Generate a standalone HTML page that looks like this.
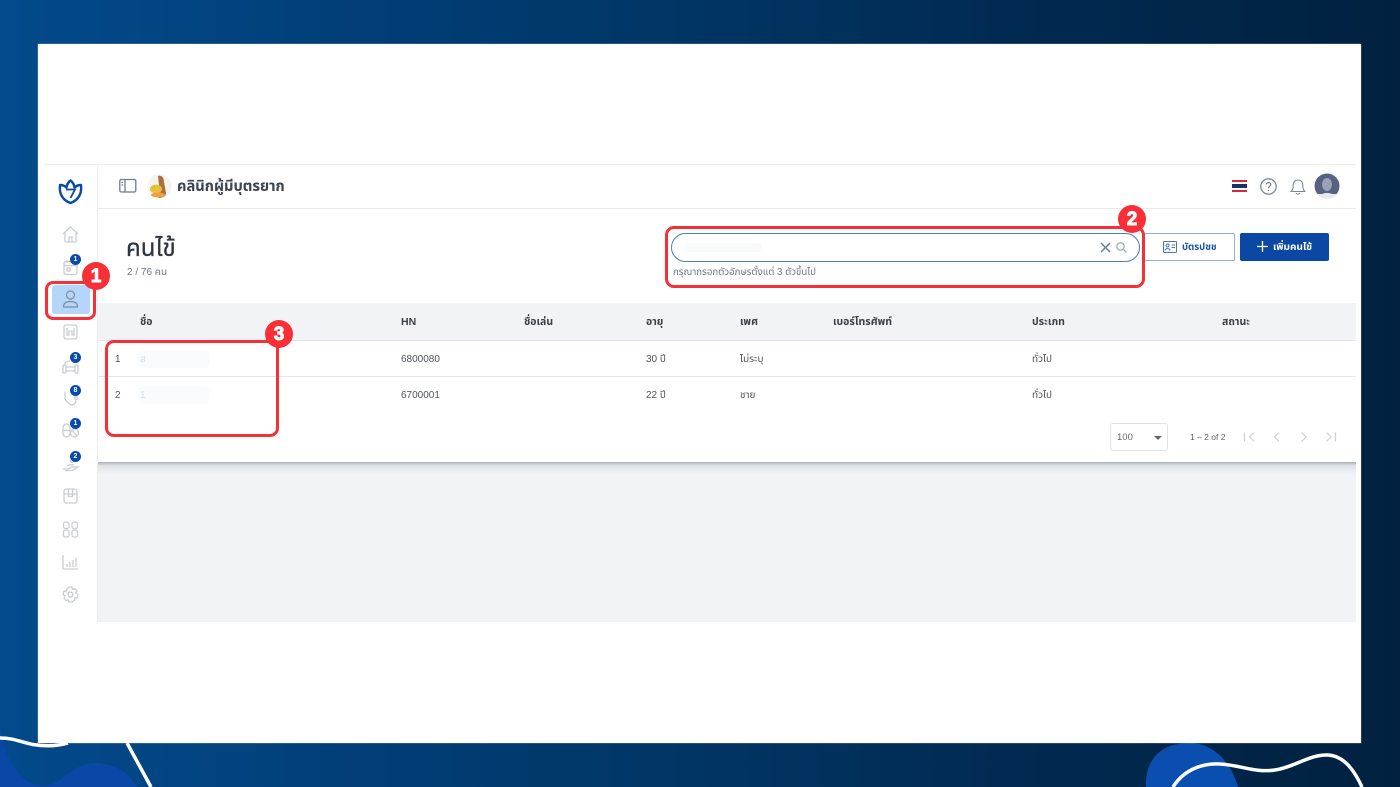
<!DOCTYPE html>
<html><head><meta charset="utf-8">
<style>
html,body{margin:0;padding:0}
body{width:1400px;height:787px;overflow:hidden;position:relative;background:linear-gradient(90deg,#024a8c 0%,#013d75 28%,#013462 52%,#012a52 72%,#01213f 100%);font-family:"Liberation Sans","Noto Sans Thai","Noto Sans CJK SC",sans-serif;color:#4f545c}
.a{position:absolute}
.t{position:absolute;white-space:nowrap;line-height:16px;font-size:10px}
.h{font-size:10.500px;top:313.500px}
.b{font-weight:700;color:#3a4048}
.r1{top:351.500px}
.r2{top:387.500px}
.badge{position:absolute;width:11px;height:11px;border-radius:50%;background:#0a4aa8;color:#fff;font-size:7px;line-height:11px;text-align:center;font-weight:700}
.num{position:absolute;width:28px;height:28px;border-radius:50%;background:#f92f37;color:#fff;font-size:19px;line-height:29px;text-align:center;font-weight:700;-webkit-text-stroke:.9px #fff}
.red{position:absolute;border:3px solid #f92f37;box-sizing:border-box}
svg{position:absolute;overflow:visible}
.ic{fill:none;stroke:#c9cdd2;stroke-width:1.300}
</style></head><body>
<svg style="left:0;top:0" width="1400" height="787" viewBox="0 0 1400 787">
<path d="M0 728L3 740C8 765 25 786 43 786C62 786 72 762 97 763C118 764 130 775 137 787H0Z" fill="#0a48a8"/>
<path d="M1146 787C1145 760 1160 743 1190 743C1215 743 1232 765 1238 787Z" fill="#0a4fb0"/>
</svg>
<div class="a" style="left:38px;top:44px;width:1323px;height:699px;background:#fff;box-shadow:0 0 0 .5px rgba(255,255,255,.3)"></div>
<svg style="left:0;top:0" width="1400" height="787" viewBox="0 0 1400 787">
<path d="M0 738C14 738 20 742 33 744.500C45 746.500 58 746 68 743" fill="none" stroke="#fff" stroke-width="3.500"/>
<path d="M127 743L151 787" fill="none" stroke="#fff" stroke-width="3.500"/>
<path d="M1173 787C1185 768 1205 763 1220 764C1240 765 1255 773 1275 770C1295 767 1310 754 1328 755C1345 756 1355 772 1362 787" fill="none" stroke="#fff" stroke-width="3.500"/>
</svg>

<!-- app frame -->
<div class="a" style="left:44px;top:164px;width:1312px;height:1px;background:#eceef0"></div>
<div class="a" style="left:97px;top:165px;width:1px;height:457px;background:#eceef0"></div>
<div class="a" style="left:98px;top:208px;width:1258px;height:1px;background:#e8eaed"></div>

<!-- logo -->
<svg style="left:59px;top:179px" width="23" height="25" viewBox="0 0 23 25"><path d="M1 6C4 6 6 7 7.500 8.500C8 5 9.500 3 11.500 1.500C13.500 3 15 5 15.500 8.500C17 7 19 6 22 6C23 14 20 21 11.500 24C3 21 0 14 1 6Z" fill="none" stroke="#0a4aa0" stroke-width="2.400" stroke-linejoin="round"/><path d="M7 10.500H16L11.500 19" fill="none" stroke="#0a4aa0" stroke-width="1.800"/></svg>

<!-- sidebar selected -->
<div class="a" style="left:52px;top:285px;width:38px;height:29px;background:#b5d5fb;border-radius:3px"></div>

<!-- sidebar icons -->
<svg class="ic" style="left:62px;top:226px" width="17" height="17" viewBox="0 0 17 17"><path d="M1 8L8.500 1L16 8M3 7V16H14V7M7 16V11H10V16"/></svg>
<svg class="ic" style="left:63px;top:259px" width="15" height="16" viewBox="0 0 15 16"><rect x="1" y="2.500" width="13" height="13" rx="2"/><path d="M1 6.500H14M4 1V4M11 1V4"/><rect x="4" y="9" width="3" height="3"/></svg>
<svg style="left:62px;top:290px" width="17" height="18" viewBox="0 0 17 18" fill="none" stroke="#7d8ca0" stroke-width="1.200"><circle cx="8.500" cy="5" r="4"/><path d="M1.500 17C1.500 13 4 11.500 8.500 11.500S15.500 13 15.500 17Z" stroke-linejoin="round"/></svg>
<svg class="ic" style="left:63px;top:324px" width="15" height="16" viewBox="0 0 15 16"><rect x="1" y="1" width="13" height="14" rx="2"/><path d="M4 4V11H6V7H9V11H11V4"/></svg>
<svg class="ic" style="left:62px;top:360px" width="17" height="14" viewBox="0 0 17 14"><rect x="1" y="5" width="3" height="8" rx="1"/><rect x="13" y="5" width="3" height="8" rx="1"/><path d="M4 7H13M4 11H13M3 5C3 2 5 1 8 1"/></svg>
<svg class="ic" style="left:63px;top:391px" width="15" height="15" viewBox="0 0 15 15"><path d="M2 1V6C2 10 5 12 8 14C11 14 13 12 13 9"/><circle cx="13" cy="7" r="1.500"/></svg>
<svg class="ic" style="left:62px;top:423px" width="17" height="15" viewBox="0 0 17 15"><rect x="1" y="1" width="7" height="13" rx="3.500"/><path d="M1 7.500H8"/><circle cx="12.500" cy="10" r="4"/><path d="M10 7L15 13"/></svg>
<svg class="ic" style="left:62px;top:458px" width="17" height="14" viewBox="0 0 17 14"><path d="M1 11H6L10 9H16L10 12.500H3M5 8C7 6 10 7 12 7"/><circle cx="10" cy="3" r="1.500"/></svg>
<svg class="ic" style="left:63px;top:488px" width="15" height="16" viewBox="0 0 15 16"><rect x="1" y="1" width="13" height="14" rx="2.500"/><path d="M1 6H14M5.500 1V8.500H9.500V1"/></svg>
<svg class="ic" style="left:62px;top:521px" width="17" height="17" viewBox="0 0 17 17"><rect x="1.500" y="1" width="5.500" height="6.500" rx="2"/><rect x="10" y="1" width="5.500" height="6.500" rx="2"/><rect x="1.500" y="9" width="5.500" height="7" rx="2"/><rect x="10" y="9" width="5.500" height="7" rx="2"/></svg>
<svg class="ic" style="left:62px;top:554px" width="17" height="16" viewBox="0 0 17 16"><path d="M1 1V15H16M5 13V10M8 13V8M11 13V6M14 13V4"/></svg>
<svg class="ic" style="left:62px;top:586px" width="17" height="17" viewBox="0 0 17 17"><circle cx="8.500" cy="8.500" r="2.500"/><path d="M7 1H10L10.500 3.500L13 2.500L15 5L13.500 7L16 8.500L15 12L13 11.500L12.500 14L10 16H7L6 14L4 14.500L2 12L3 10L1 8.500L2 5L4 5.500L5 3Z" stroke-linejoin="round"/></svg>

<div class="badge" style="left:70px;top:254px">1</div>
<div class="badge" style="left:70px;top:352px">3</div>
<div class="badge" style="left:70px;top:385px">8</div>
<div class="badge" style="left:70px;top:418px">1</div>
<div class="badge" style="left:70px;top:451px">2</div>

<!-- topbar -->
<svg style="left:119px;top:178px" width="18" height="16" viewBox="0 0 18 16" fill="none" stroke="#6e7c8c" stroke-width="1.300"><rect x=".8" y="1.500" width="16" height="12.500" rx="1.500"/><path d="M6 1.500V14"/><path d="M2.500 4.500H4M2.500 7H4"/></svg>
<svg style="left:147px;top:173px" width="25" height="26" viewBox="0 0 25 26"><circle cx="12.500" cy="13" r="12" fill="#f6f3ef"/><path d="M11 3C15 2 17 5 17 9L19 20C19 24 14 25 12 25L9 22L12 12Z" fill="#a8703a"/><ellipse cx="9" cy="16" rx="6" ry="4.500" fill="#e2c23c"/><ellipse cx="11" cy="22" rx="7" ry="2.500" fill="#f0a040"/></svg>
<div class="t b" style="left:177px;top:178.500px;font-size:14.700px;color:#3a4350">คลินิกผู้มีบุตรยาก</div>
<svg style="left:1232px;top:180px" width="15" height="12" viewBox="0 0 15 12"><rect width="15" height="12" fill="#fff"/><rect width="15" height="2" fill="#d8283c"/><rect y="10" width="15" height="2" fill="#d8283c"/><rect y="4" width="15" height="4" fill="#1e2f6e"/></svg>
<svg style="left:1260px;top:178px" width="17" height="17" viewBox="0 0 17 17" fill="none" stroke="#7b8795" stroke-width="1.300"><circle cx="8.500" cy="8.500" r="7.700"/><path d="M6.300 6.500C6.300 3.800 10.800 3.800 10.800 6.500C10.800 8.300 8.500 8.300 8.500 10.300M8.500 12V13"/></svg>
<svg style="left:1290px;top:178px" width="16" height="17" viewBox="0 0 16 17" fill="none" stroke="#7b8795" stroke-width="1.100"><path d="M1 13.500C3 12 3.200 10 3.200 7.500C3.200 4 5 2 8 2S12.800 4 12.800 7.500C12.800 10 13 12 15 13.500Z" stroke-linejoin="round"/><path d="M6 15C6.500 16.500 9.500 16.500 10 15"/></svg>
<svg style="left:1314px;top:173px" width="26" height="26" viewBox="0 0 26 26"><defs><clipPath id="c"><circle cx="13" cy="13" r="12.500"/></clipPath></defs><circle cx="13" cy="13" r="12.500" fill="#56627f"/><g clip-path="url(#c)"><rect y="21" width="26" height="5" fill="#e6ebea"/><path d="M6 26C6 21 9 20 13 20S20 21 20 26Z" fill="#e6ebea"/><ellipse cx="13" cy="11.500" rx="5" ry="6.500" fill="#9aa2b8"/></g></svg>

<!-- page heading -->
<div class="t" style="left:126px;top:237px;font-size:24px;line-height:24px;color:#2e3642;-webkit-text-stroke:.3px #2e3642">คนไข้</div>
<div class="t" style="left:127px;top:265px;color:#6c7785">2 / 76 คน</div>

<!-- search -->
<div class="a" style="left:671px;top:233px;width:469px;height:29px;box-sizing:border-box;border:1.500px solid #4a7ec0;border-radius:15px;background:#fff"></div>
<div class="a" style="left:684px;top:243px;width:78px;height:9px;background:#f8fafc;border-radius:4px"></div>
<svg style="left:1100px;top:242px" width="11" height="11" viewBox="0 0 11 11" fill="none" stroke="#6e7c8c" stroke-width="1.500"><path d="M1 1L10 10M10 1L1 10"/></svg>
<svg style="left:1116px;top:242px" width="11" height="11" viewBox="0 0 11 11" fill="none" stroke="#a4adb8" stroke-width="1.300"><circle cx="4.500" cy="4.500" r="3.700"/><path d="M7.300 7.300L10.500 10.500"/></svg>
<div class="t" style="left:673px;top:265px;font-size:9.700px;color:#6c7785">กรุณากรอกตัวอักษรตั้งแต่ 3 ตัวขึ้นไป</div>

<!-- buttons -->
<div class="a" style="left:1144px;top:233px;width:91px;height:28px;box-sizing:border-box;border:1px solid #8fb0da;border-radius:2px;background:#fff"></div>
<svg style="left:1163px;top:241px" width="14" height="12" viewBox="0 0 14 12" fill="none" stroke="#4b78b4" stroke-width="1"><rect x=".5" y=".5" width="13" height="11" rx="1"/><circle cx="4.500" cy="4.500" r="1.500"/><path d="M2 9.500C2 7 7 7 7 9.500M8.500 4H12M8.500 6.500H12"/></svg>
<div class="t b" style="left:1182px;top:240px;font-size:9.500px;color:#1a56a4">บัตรปชช</div>
<div class="a" style="left:1240px;top:233px;width:89px;height:28px;background:#0a48a4;border-radius:2px"></div>
<svg style="left:1257px;top:241px" width="11" height="11" viewBox="0 0 11 11" stroke="#fff" stroke-width="1.300"><path d="M5.500 0V11M0 5.500H11"/></svg>
<div class="t b" style="left:1273px;top:240px;font-size:10px;color:#fff">เพิ่มคนไข้</div>

<!-- table -->
<div class="a" style="left:98px;top:303px;width:1258px;height:37px;background:#f1f3f6;border-bottom:1px solid #e2e4e8"></div>
<div class="a" style="left:98px;top:376px;width:1258px;height:1px;background:#e4e6e9"></div>
<div class="t b h" style="left:140px">ชื่อ</div>
<div class="t b h" style="left:401px">HN</div>
<div class="t b h" style="left:524px">ชื่อเล่น</div>
<div class="t b h" style="left:646px">อายุ</div>
<div class="t b h" style="left:740px">เพศ</div>
<div class="t b h" style="left:833px">เบอร์โทรศัพท์</div>
<div class="t b h" style="left:1032px">ประเภท</div>
<div class="t b h" style="left:1222px">สถานะ</div>

<div class="t r1" style="left:115px">1</div>
<div class="a" style="left:138px;top:350px;width:72px;height:18px;background:#fafbfd;border-radius:6px"></div>
<div class="t r1" style="left:140px;color:#d5dbe6">ส</div>
<div class="t r1" style="left:401px">6800080</div>
<div class="t r1" style="left:646px">30 ปี</div>
<div class="t r1" style="left:740px">ไม่ระบุ</div>
<div class="t r1" style="left:1032px">ทั่วไป</div>

<div class="t r2" style="left:115px">2</div>
<div class="a" style="left:138px;top:386px;width:72px;height:18px;background:#fafbfd;border-radius:6px"></div>
<div class="t r2" style="left:140px;color:#d5dbe6">1</div>
<div class="t r2" style="left:401px">6700001</div>
<div class="t r2" style="left:646px">22 ปี</div>
<div class="t r2" style="left:740px">ชาย</div>
<div class="t r2" style="left:1032px">ทั่วไป</div>

<!-- pagination -->
<div class="a" style="left:1110px;top:423px;width:58px;height:28px;box-sizing:border-box;border:1px solid #dfe3e8;border-radius:3px"></div>
<div class="t" style="left:1117px;top:430px;font-size:9.500px;color:#666">100</div>
<div class="a" style="left:1154px;top:436px;width:0;height:0;border-left:4px solid transparent;border-right:4px solid transparent;border-top:4px solid #666"></div>
<div class="t" style="left:1190px;top:429px;font-size:8.500px;color:#5d5f63">1 – 2 of 2</div>
<svg style="left:1243px;top:431px" width="94" height="12" viewBox="0 0 94 12" fill="none" stroke="#cdd1d6" stroke-width="1.200"><path d="M1.500 1.500V10.500M11 1.500L6.500 6L11 10.500"/><path d="M36 1.500L31.500 6L36 10.500"/><path d="M58.500 1.500L63 6L58.500 10.500"/><path d="M83.500 1.500L88 6L83.500 10.500M92.500 1.500V10.500"/></svg>

<!-- lower area -->
<div class="a" style="left:98px;top:462px;width:1258px;height:160px;background:#f1f3f6"></div>
<div class="a" style="left:98px;top:462px;width:1258px;height:12px;background:linear-gradient(180deg,#aab0b5 0%,#dfe2e6 30%,#f1f3f6 100%)"></div>

<!-- red annotations -->
<div class="red" style="left:45px;top:281px;width:51px;height:39px;border-radius:8px"></div>
<div class="red" style="left:665px;top:226px;width:480px;height:62px;border-radius:9px"></div>
<div class="red" style="left:105px;top:340px;width:174px;height:97px;border-radius:9px"></div>
<div class="num" style="left:82px;top:262px">1</div>
<div class="num" style="left:1118px;top:205px">2</div>
<div class="num" style="left:265px;top:320px">3</div>
</body></html>
